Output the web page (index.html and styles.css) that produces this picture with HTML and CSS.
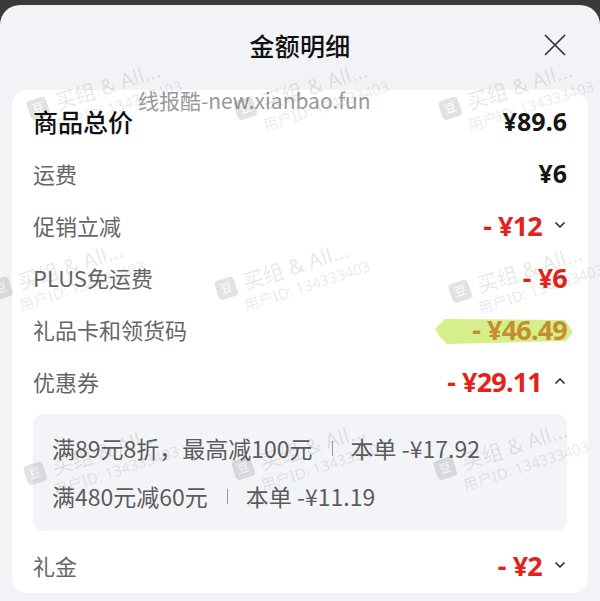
FILE: index.html
```html
<!DOCTYPE html>
<html lang="zh-CN">
<head>
<meta charset="utf-8">
<title>金额明细</title>
<link rel="stylesheet" href="styles.css">
</head>
<body>
<div class="backdrop"></div>
<div class="sheet">
  <div class="sheet-header">
    <span></span>
    <h1 class="title">金额明细</h1>
    <button class="close" aria-label="关闭">
      <svg width="24" height="24" viewBox="0 0 24 24"><path d="M2.5 2.5 L21.5 21.5 M21.5 2.5 L2.5 21.5" stroke="#333" stroke-width="1.7" fill="none" stroke-linecap="round"/></svg>
    </button>
  </div>
  <div class="card">
    <div class="row row-main">
      <span class="label">商品总价</span>
      <span class="amount black">¥89.6</span>
    </div>
    <div class="row">
      <span class="label">运费</span>
      <span class="amount black">¥6</span>
    </div>
    <div class="row">
      <span class="label">促销立减</span>
      <span class="amount red"><span class="minus">-</span>¥12</span>
      <svg class="chev" width="12" height="8" viewBox="0 0 12 8"><path d="M1.5 1.5 L6 6 L10.5 1.5" stroke="#222" stroke-width="1.5" fill="none"/></svg>
    </div>
    <div class="row">
      <span class="label">PLUS免运费</span>
      <span class="amount red"><span class="minus">-</span>¥6</span>
    </div>
    <div class="row">
      <span class="label">礼品卡和领货码</span>
      <span class="amount gold">
        <svg class="marker" width="138" height="27" viewBox="0 0 138 27"><path d="M0 11 L10 1 L130 2 L138 14 L131 23 L12 26 L5 19 Z" fill="#d5ef8a"/></svg>
        <span class="amount-text"><span class="minus">-</span>¥46.49</span>
      </span>
    </div>
    <div class="row">
      <span class="label">优惠券</span>
      <span class="amount red"><span class="minus">-</span>¥29.11</span>
      <svg class="chev" width="12" height="8" viewBox="0 0 12 8"><path d="M1.5 6.5 L6 2 L10.5 6.5" stroke="#222" stroke-width="1.5" fill="none"/></svg>
    </div>
    <div class="coupons">
      <div class="coupon-line">满89元8折，最高减100元<span class="sep"></span>本单 -¥17.92</div>
      <div class="coupon-line">满480元减60元<span class="sep"></span>本单 -¥11.19</div>
    </div>
    <div class="row row-last">
      <span class="label">礼金</span>
      <span class="amount red"><span class="minus">-</span>¥2</span>
      <svg class="chev" width="12" height="8" viewBox="0 0 12 8"><path d="M1.5 1.5 L6 6 L10.5 1.5" stroke="#222" stroke-width="1.5" fill="none"/></svg>
    </div>
  </div>
</div>

<div class="watermarks" aria-hidden="true">
  <div class="site-mark">线报酷-new.xianbao.fun</div>
  <div class="wm" style="left:25px;top:100px"><div class="wm-top"><span class="wm-icon">豆</span>买组 &amp; All...</div><div class="wm-id">用户ID: 134333403</div></div>
  <div class="wm" style="left:232px;top:100px"><div class="wm-top"><span class="wm-icon">豆</span>买组 &amp; All...</div><div class="wm-id">用户ID: 134333403</div></div>
  <div class="wm" style="left:437px;top:100px"><div class="wm-top"><span class="wm-icon">豆</span>买组 &amp; All...</div><div class="wm-id">用户ID: 134333403</div></div>
  <div class="wm" style="left:-12px;top:280px"><div class="wm-top"><span class="wm-icon">豆</span>买组 &amp; All...</div><div class="wm-id">用户ID: 134333403</div></div>
  <div class="wm" style="left:213px;top:280px"><div class="wm-top"><span class="wm-icon">豆</span>买组 &amp; All...</div><div class="wm-id">用户ID: 134333403</div></div>
  <div class="wm" style="left:447px;top:283px"><div class="wm-top"><span class="wm-icon">豆</span>买组 &amp; All...</div><div class="wm-id">用户ID: 134333403</div></div>
  <div class="wm" style="left:22px;top:465px"><div class="wm-top"><span class="wm-icon">豆</span>买组 &amp; All...</div><div class="wm-id">用户ID: 134333403</div></div>
  <div class="wm" style="left:230px;top:460px"><div class="wm-top"><span class="wm-icon">豆</span>买组 &amp; All...</div><div class="wm-id">用户ID: 134333403</div></div>
  <div class="wm" style="left:432px;top:460px"><div class="wm-top"><span class="wm-icon">豆</span>买组 &amp; All...</div><div class="wm-id">用户ID: 134333403</div></div>
</div>
</body>
</html>
```

FILE: styles.css
```css
* { box-sizing: border-box; }
html, body {
  margin: 0;
  padding: 0;
  width: 600px;
  height: 601px;
  overflow: hidden;
}
body {
  background: #3a3a3a;
  font-family: "Noto Sans CJK SC", "Noto Sans", sans-serif;
  position: relative;
  display: flex;
  flex-direction: column;
}
.backdrop {
  height: 5px;
  flex: none;
}
.sheet {
  flex: 1;
  background: #f2f3f7;
  border-radius: 20px 20px 0 0;
  display: flex;
  flex-direction: column;
}
.sheet-header {
  height: 80px;
  display: grid;
  grid-template-columns: 1fr auto 1fr;
  align-items: center;
}
.title {
  margin: 0;
  font-size: 25px;
  font-weight: 500;
  color: #111;
  letter-spacing: 0.3px;
}
.close {
  justify-self: end;
  margin-right: 33px;
  width: 24px;
  height: 24px;
  padding: 0;
  border: 0;
  background: none;
  display: flex;
}
.card {
  margin: 5px 12px 0;
  background: #fff;
  border-radius: 16px;
  padding: 5px 21px 2px;
}
.row {
  height: 52px;
  display: flex;
  align-items: center;
}
.label {
  flex: 1;
  font-size: 22px;
  color: #666;
}
.row-main .label {
  font-size: 25px;
  font-weight: 500;
  color: #111;
}
.amount {
  font-family: "Noto Sans", sans-serif;
  font-weight: 700;
  font-size: 25px;
  line-height: 1;
  white-space: nowrap;
}
.amount.black { color: #161616; }
.amount.red {
  color: #e2231a;
  font-size: 27px;
  letter-spacing: -0.8px;
}
.minus {
  margin-right: 7px;
}
.amount.gold {
  position: relative;
  color: #c68d2e;
  font-size: 27px;
  letter-spacing: -0.8px;
}
.amount-text { position: relative; }
.marker {
  position: absolute;
  right: -6px;
  top: 50%;
  margin-top: -11px;
}
.chev {
  margin-left: 12px;
  margin-right: 1px;
}
.coupons {
  margin-top: 7px;
  background: #f3f4f7;
  border-radius: 10px;
  padding: 10px 19px 11px;
}
.coupon-line {
  height: 48px;
  display: flex;
  align-items: center;
  font-size: 23px;
  color: #5c5c5c;
  white-space: nowrap;
}
.sep {
  display: inline-block;
  width: 1px;
  height: 15px;
  background: #999;
  margin: 0 18px 0 19px;
}
.row-last {
  margin-top: 8px;
}

/* watermark overlay */
.watermarks {
  position: absolute;
  inset: 0;
  pointer-events: none;
  overflow: hidden;
}
.site-mark {
  position: absolute;
  left: 138px;
  top: 88px;
  font-size: 21px;
  line-height: 24px;
  color: #9a9a9a;
  font-family: "Noto Sans CJK SC", "Noto Sans", sans-serif;
}
.wm {
  position: absolute;
  transform: rotate(-18deg);
  transform-origin: left top;
  color: rgba(0, 0, 0, 0.1);
  white-space: nowrap;
}
.wm-top {
  display: flex;
  align-items: center;
  font-size: 21px;
  line-height: 24px;
  font-family: "Noto Sans", "Noto Sans CJK SC", sans-serif;
}
.wm-icon {
  display: inline-flex;
  width: 20px;
  height: 20px;
  border-radius: 4px;
  background: rgba(0, 0, 0, 0.9);
  color: #fff;
  font-size: 12px;
  align-items: center;
  justify-content: center;
  margin-right: 8px;
  opacity: 0.12;
}
.wm-id {
  font-size: 15px;
  line-height: 20px;
  margin-left: 22px;
  font-family: "Noto Sans", "Noto Sans CJK SC", sans-serif;
}
```
